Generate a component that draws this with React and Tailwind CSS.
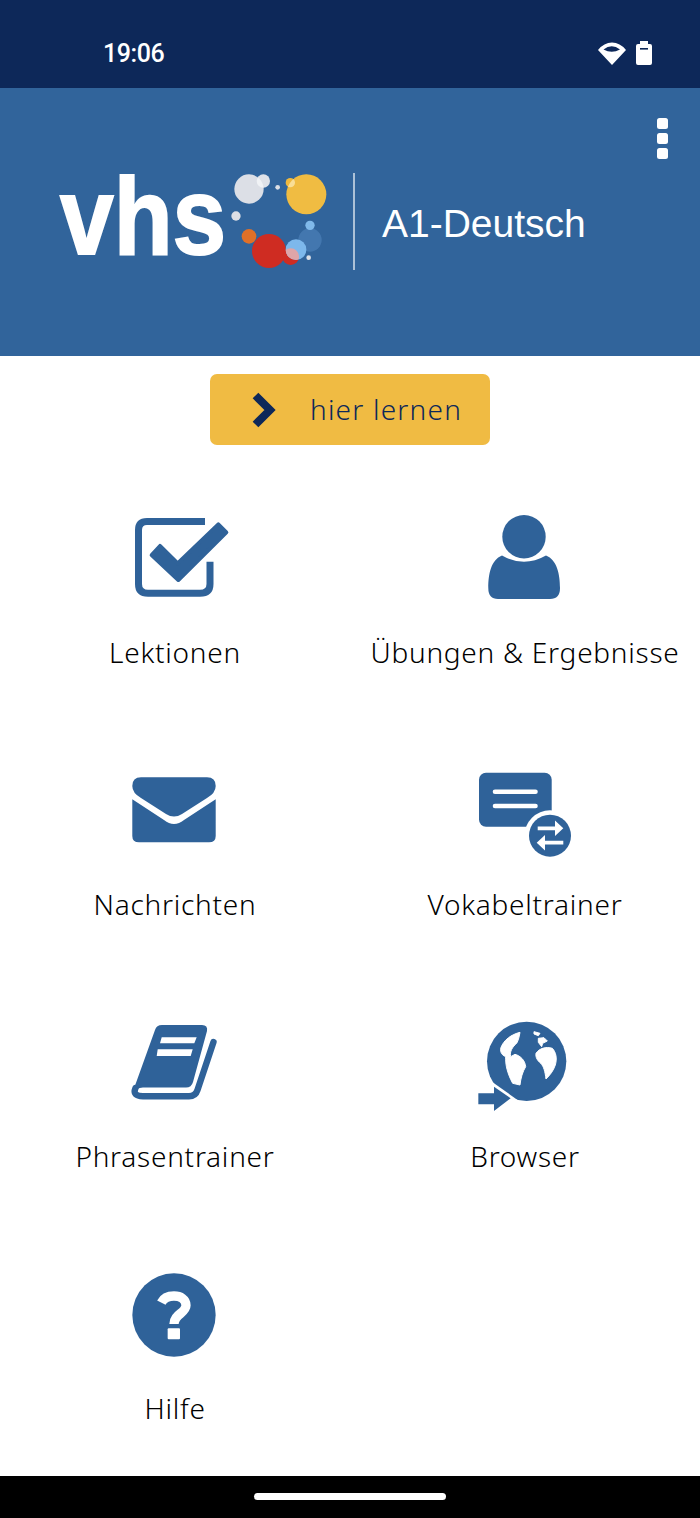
const BLUE = "#2f6299";

const CheckIcon = () => (
  <svg width="120" height="100" viewBox="0 0 120 100" fill="none">
    <path d="M90 13.5H32Q23.5 13.5 23.5 22V76Q23.5 85.3 33 85.3H85Q95 85.3 95 76V53.7" stroke={BLUE} strokeWidth="7" />
    <g transform="translate(-5 -8) scale(0.3333)">
      <path d="M150 138L203 190L325 73L349 97L205 240L125 165Z" fill={BLUE} stroke={BLUE} strokeWidth="12" strokeLinejoin="round" />
    </g>
  </svg>
);

const PersonIcon = () => (
  <svg width="120" height="100" viewBox="0 0 120 100" fill={BLUE}>
    <circle cx="59" cy="28.7" r="21.7" />
    <path d="M23.3 80C23.3 66 26 52 37 47.5Q59 60 81 47.5C92 52 95 66 95 80Q95 91 85 91H33Q23.3 91 23.3 80Z" />
  </svg>
);

const MailIcon = () => (
  <svg width="120" height="100" viewBox="0 0 120 100" fill={BLUE}>
    <path d="M17.3 26Q17.3 17.3 26 17.3H92Q100.7 17.3 100.7 26Q100.7 33 92 38L67 54Q59 59 51 54L26 38Q17.3 33 17.3 26Z" />
    <path d="M17.3 39.3L49 60Q59 68 69 60L100.7 39.3V76Q100.7 82.3 94 82.3H24Q17.3 82.3 17.3 76Z" />
  </svg>
);

const VocabIcon = () => (
  <svg width="120" height="100" viewBox="0 0 120 100" fill="none">
    <rect x="14" y="12.7" width="72.7" height="54" rx="7" fill={BLUE} />
    <path d="M30 31.7H70.5M30 46H70.5" stroke="#fff" strokeWidth="4.6" strokeLinecap="round" />
    <circle cx="85" cy="75.7" r="25.5" fill="#fff" />
    <circle cx="85" cy="75.7" r="21" fill={BLUE} />
    <path d="M72.7 68.3H91M79 82.7H98.3" stroke="#fff" strokeWidth="3.8" />
    <path d="M90 60.5L98.3 68.3L90 76ZM80 75L71.7 82.7L80 90.5Z" fill="#fff" />
  </svg>
);

const BookIcon = () => (
  <svg width="120" height="100" viewBox="0 0 120 100" fill="none">
    <path d="M40 18Q41.5 13 47 13H87Q93 13 92 19L78 70Q76.5 75.5 71 75.5H28Q21 76 17 82Z" fill={BLUE} />
    <path d="M20.5 76Q17 84.3 28 84.3H74Q80.5 84.3 82.5 78L98.5 30" stroke={BLUE} strokeWidth="6.4" strokeLinecap="round" />
    <path d="M46.7 25.3H81.7L79.3 31.3H45ZM42.7 37.3H77.7L75.7 44H41.7Z" fill="#fff" />
  </svg>
);

const GlobeIcon = () => (
  <svg width="120" height="100" viewBox="0 0 120 100">
    <g transform="translate(5 3) scale(0.3333)">
      <circle cx="170" cy="139" r="119" fill={BLUE} />
      <g fill="#fff" stroke="#fff" strokeWidth="3" strokeLinejoin="round">
        <path d="M150 52C125 58 100 75 92 100C91 112 95 120 107 125C106 150 112 175 128 205L150 210C152 190 158 170 167 155C165 135 150 122 135 118L122 125C118 110 128 95 140 85C146 75 148 62 150 52Z" />
        <path d="M198 115C208 100 228 94 247 100C258 112 262 130 256 150C250 168 240 180 228 192C225 170 222 155 212 145C203 137 196 128 198 115Z" />
        <path d="M192 50L210 55L205 62L192 57ZM205 70L222 68L232 78L218 85L215 95L205 82Z" />
      </g>
      <path d="M55 193L150 260V320H0V193Z" fill="#fff" />
      <path d="M25 235H72V215L122 250L72 288V268H25Z" fill={BLUE} />
    </g>
  </svg>
);

const HelpIcon = () => (
  <svg width="120" height="100" viewBox="0 0 120 100">
    <g transform="translate(5 -4) scale(0.3333)">
      <circle cx="162" cy="165" r="125" fill={BLUE} />
      <path d="M124 128C132 112 148 108 162 108C182 108 198 118 198 136C198 160 162 162 162 192" fill="none" stroke="#fff" strokeWidth="28" />
      <rect x="143" y="205" width="37" height="33" rx="3" fill="#fff" />
    </g>
  </svg>
);

const items = [
  { label: "Lektionen", icon: <CheckIcon /> },
  { label: "Übungen & Ergebnisse", icon: <PersonIcon /> },
  { label: "Nachrichten", icon: <MailIcon /> },
  { label: "Vokabeltrainer", icon: <VocabIcon /> },
  { label: "Phrasentrainer", icon: <BookIcon /> },
  { label: "Browser", icon: <GlobeIcon /> },
  { label: "Hilfe", icon: <HelpIcon /> },
];

const Bubbles = () => (
  <svg width="120" height="110" viewBox="0 0 360 330" className="shrink-0 -mt-[3px]">
    <defs>
      <clipPath id="yellowClip"><circle cx="259" cy="88" r="60" /></clipPath>
      <clipPath id="blueClip"><circle cx="228" cy="254" r="31" /></clipPath>
      <clipPath id="grayClip"><circle cx="87" cy="72" r="44" /></clipPath>
    </defs>
    <circle cx="130" cy="48" r="20" fill="#dfe2e8" />
    <circle cx="87" cy="72" r="44" fill="#dcdfe6" />
    <circle cx="130" cy="48" r="20" fill="#f0f2f5" clipPath="url(#grayClip)" />
    <circle cx="173" cy="67" r="7" fill="#dcdfe6" />
    <circle cx="211" cy="53" r="14" fill="#efb93e" />
    <circle cx="259" cy="88" r="60" fill="#f0bc42" />
    <circle cx="211" cy="53" r="14" fill="#f9de96" clipPath="url(#yellowClip)" />
    <circle cx="48" cy="153" r="14" fill="#dcdfe6" />
    <circle cx="87" cy="214" r="22" fill="#e07028" />
    <circle cx="270" cy="225" r="35" fill="#4a7db5" fillOpacity="0.75" />
    <circle cx="147" cy="258" r="51" fill="#cf2c22" />
    <circle cx="212" cy="275" r="25" fill="#cf2c22" />
    <circle cx="270" cy="181" r="14" fill="#80b9ea" />
    <circle cx="228" cy="254" r="31" fill="#7db8ec" />
    <circle cx="212" cy="275" r="25" fill="#dfa5a8" clipPath="url(#blueClip)" />
    <circle cx="266" cy="278" r="7" fill="#dcdfe6" />
  </svg>
);

export default function App() {
  return (
    <div className="h-screen flex flex-col bg-white font-['Noto_Sans',sans-serif]">
      <div className="h-[88px] shrink-0 bg-[#0d2859] flex items-center justify-between pl-[103px] pr-[48px] pt-[18px] text-white">
        <span className="font-['Roboto',sans-serif] text-[25px] tracking-[-0.4px] font-medium leading-none">19:06</span>
        <div className="flex items-center gap-[10px]">
          <svg width="28" height="23" viewBox="0 0 28 23">
            <path fillRule="evenodd" d="M14 23L0 8Q6 0.5 14 0.5T28 8ZM5.5 7.5Q13.8 1 22 7.5Q13.8 12 5.5 7.5Z" fill="#fff" />
          </svg>
          <svg width="16" height="24" viewBox="0 0 16 24">
            <path d="M4 0H12V3H14Q16 3 16 5V22Q16 24 14 24H2Q0 24 0 22V5Q0 3 2 3H4Z" fill="#fff" />
            <rect x="4" y="7" width="8" height="1.6" fill="#0d2859" />
          </svg>
        </div>
      </div>

      <header className="h-[268px] shrink-0 bg-[#31649b] relative">
        <div className="flex items-center pl-[60px] pt-[85px] h-[182px]">
          <span className="font-['Liberation_Sans',sans-serif] font-bold text-white text-[109px] leading-[97px] w-[160px] origin-left scale-x-[.885] [-webkit-text-stroke:2px_white] -mt-[10px]">
            vhs
          </span>
          <Bubbles />
          <div className="w-[2px] h-[97px] bg-white/60 ml-[13px]" />
          <span className="font-['Liberation_Sans',sans-serif] text-white text-[39px] leading-none ml-[27px] mt-[4px]">
            A1-Deutsch
          </span>
        </div>
        <div className="absolute top-[30px] right-[32px] flex flex-col gap-[4px]">
          <div className="w-[11px] h-[11px] rounded-[2.5px] bg-white" />
          <div className="w-[11px] h-[11px] rounded-[2.5px] bg-white" />
          <div className="w-[11px] h-[11px] rounded-[2.5px] bg-white" />
        </div>
      </header>

      <main className="flex-1 flex flex-col items-center">
        <button className="mt-[18px] w-[280px] h-[71px] rounded-[7px] bg-[#f0bb43] flex items-center pl-[42px] text-[#0d2859]">
          <svg width="24" height="36" viewBox="0 0 24 36" fill="none">
            <path d="M3.5 3.5L18 18L3.5 32.5" stroke="#0d2859" strokeWidth="8" />
          </svg>
          <span className="ml-[34px] pb-[2px] text-[28px] font-[350] tracking-[1.2px] leading-none">hier lernen</span>
        </button>

        <div className="w-full grid grid-cols-2 gap-y-[88px] mt-[63px]">
          {items.map((item) => (
            <div key={item.label} className="flex flex-col items-center">
              <div className="h-[100px]">{item.icon}</div>
              <span className="mt-[24px] text-[28px] font-[350] tracking-[0.75px] leading-[40px] text-black">{item.label}</span>
            </div>
          ))}
        </div>
      </main>

      <div className="h-[42px] shrink-0 bg-black flex justify-center pt-[17px]">
        <div className="w-[192px] h-[7px] rounded-full bg-white" />
      </div>
    </div>
  );
}
